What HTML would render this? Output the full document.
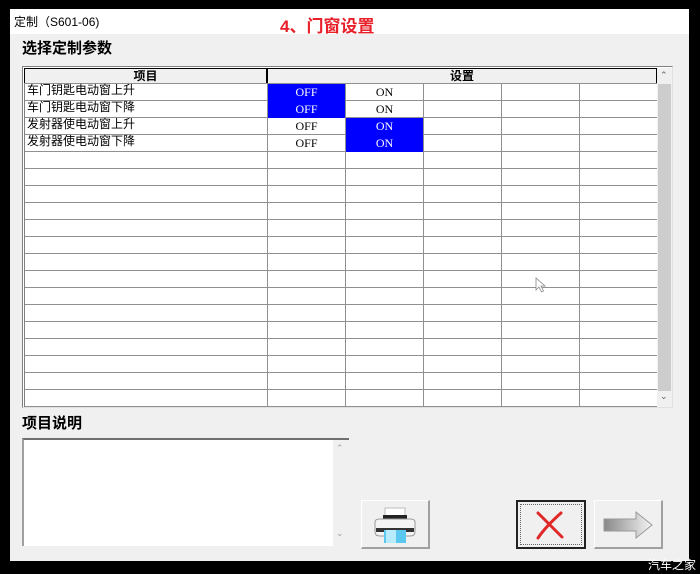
<!DOCTYPE html>
<html><head><meta charset="utf-8">
<style>
*{margin:0;padding:0;box-sizing:border-box}
body{width:700px;height:574px;background:#000;position:relative;overflow:hidden;font-family:"Liberation Sans","Noto Sans CJK SC",sans-serif}
.a{position:absolute}
.win{left:10px;top:9px;width:679px;height:552px;background:#f0f0f0}
.tb{left:10px;top:9px;width:679px;height:25px;background:#fff}
.hl{position:absolute;height:1px;background:#909090}
.vl{position:absolute;width:1px;background:#909090}
.c{position:absolute;font-family:"Liberation Serif","DejaVu Serif",serif;font-size:12px;text-align:center;line-height:17px;height:17px}
.b{background:#0000ff;color:#fff}
.it{position:absolute;left:27px;font-size:12px;line-height:13px;color:#000;font-family:"Liberation Sans","Noto Sans CJK SC",sans-serif}
</style></head><body>
<div class="a win"></div>
<div class="a tb"></div>
<div class="a" style="left:14px;top:13px;font-size:12px;color:#000">定制（S601-06)</div>
<div class="a" style="left:280px;top:12px;font-size:17px;font-weight:bold;color:#e8202a">4、门窗设置</div>
<div class="a" style="left:22px;top:37px;font-size:15px;font-weight:bold;color:#000">选择定制参数</div>

<div class="a" style="left:22px;top:66px;width:651px;height:342px;background:#fff;border:1px solid #808080;border-right-color:#e0e0e0;border-bottom-color:#e0e0e0"></div>
<div class="a" style="left:24px;top:68px;width:243px;height:16px;background:#f0f0f0;border:1px solid #000;font-size:12px;font-weight:bold;text-align:center;line-height:14px">项目</div>
<div class="a" style="left:267px;top:68px;width:390px;height:16px;background:#f0f0f0;border:1px solid #000;font-size:12px;font-weight:bold;text-align:center;line-height:14px">设置</div>
<div id="g"></div>
<div class="a" style="left:657px;top:68px;width:15px;height:339px;background:#f0f0f0"></div>
<div class="a" style="left:658px;top:84px;width:13px;height:307px;background:#cdcdcd"></div>
<div class="a" style="left:660px;top:70px;font-size:9px;color:#606060">&#8963;</div>
<div class="a" style="left:660px;top:391px;font-size:9px;color:#606060">&#8964;</div>

<div class="a" style="left:22px;top:412px;font-size:15px;font-weight:bold">项目说明</div>
<div class="a" style="left:22px;top:438px;width:327px;height:108px;background:#fff;border-top:2px solid #707070;border-left:2px solid #a0a0a0"></div>
<div class="a" style="left:333px;top:440px;width:16px;height:106px;background:#f0f0f0"></div>
<div class="a" style="left:336px;top:443px;font-size:9px;color:#a0a0a0">&#8963;</div>
<div class="a" style="left:336px;top:528px;font-size:9px;color:#a0a0a0">&#8964;</div>

<div class="a" style="left:361px;top:500px;width:69px;height:49px;background:#f0f0f0;border:1px solid #fff;border-right:2px solid #a0a0a0;border-bottom:2px solid #a0a0a0"></div>
<svg class="a" style="left:372px;top:506px" width="48" height="38">
<rect x="13" y="2" width="20" height="10" fill="#fff" stroke="#bbb"/>
<rect x="11" y="9" width="24" height="5" fill="#222"/>
<path d="M3 16 Q3 13 8 13 H38 Q43 13 43 16 V26 Q43 30 38 30 H8 Q3 30 3 26Z" fill="#f4f4f4" stroke="#999"/>
<rect x="4" y="22" width="38" height="4" fill="#333"/>
<rect x="12" y="24" width="22" height="13" fill="#5ac8f0"/>
<rect x="14" y="24" width="10" height="13" fill="#b8ecfc"/>
</svg>
<div class="a" style="left:516px;top:500px;width:70px;height:49px;background:#f0f0f0;border:2px solid #222"></div>
<div class="a" style="left:520px;top:504px;width:62px;height:41px;border:1px dotted #666"></div>
<svg class="a" style="left:530px;top:508px" width="40" height="34"><path d="M8 5 L32 29 M31 5 C22 13 14 21 8 30" stroke="#e02828" stroke-width="3" fill="none" stroke-linecap="round"/></svg>
<div class="a" style="left:594px;top:500px;width:69px;height:49px;background:#f0f0f0;border:1px solid #fff;border-right:2px solid #a0a0a0;border-bottom:2px solid #a0a0a0"></div>
<svg class="a" style="left:602px;top:510px" width="54" height="30">
<defs><linearGradient id="gr" x1="0" x2="1"><stop offset="0" stop-color="#888"/><stop offset="1" stop-color="#f4f4f4"/></linearGradient></defs>
<path d="M2 9 H34 V2 L50 15 L34 28 V21 H2Z" fill="url(#gr)" stroke="#999"/>
</svg>
<svg class="a" style="left:535px;top:277px" width="12" height="16"><path d="M1 1 V13 L4 10 L6.5 15 L8.5 14 L6 9 H10Z" fill="#fff" stroke="#888" stroke-width="0.8"/></svg>
<div class="a" style="left:648px;top:556px;font-size:12px;color:#fff">汽车之家</div>

<script>
var g=document.getElementById('g'),h='';
var cols=[267,345,423,501,579,657];
for(var i=0;i<=19;i++){h+='<div class="hl" style="left:24px;width:633px;top:'+(84+i*17-1)+'px"></div>';}
h+='<div class="vl" style="left:24px;top:84px;height:323px;background:#808080"></div>';
for(var j=0;j<cols.length;j++){h+='<div class="vl" style="left:'+cols[j]+'px;top:84px;height:323px"></div>';}
var names=['车门钥匙电动窗上升','车门钥匙电动窗下降','发射器使电动窗上升','发射器使电动窗下降'];
for(var r=0;r<4;r++){var t=84+r*17;
h+='<div class="it" style="top:'+t+'px">'+names[r]+'</div>';
var offB=r<2;
h+='<div class="c'+(offB?' b':'')+'" style="left:268px;width:77px;top:'+t+'px">OFF</div>';
h+='<div class="c'+(!offB?' b':'')+'" style="left:346px;width:77px;top:'+t+'px">ON</div>';}
g.innerHTML=h;
</script>
</body></html>
